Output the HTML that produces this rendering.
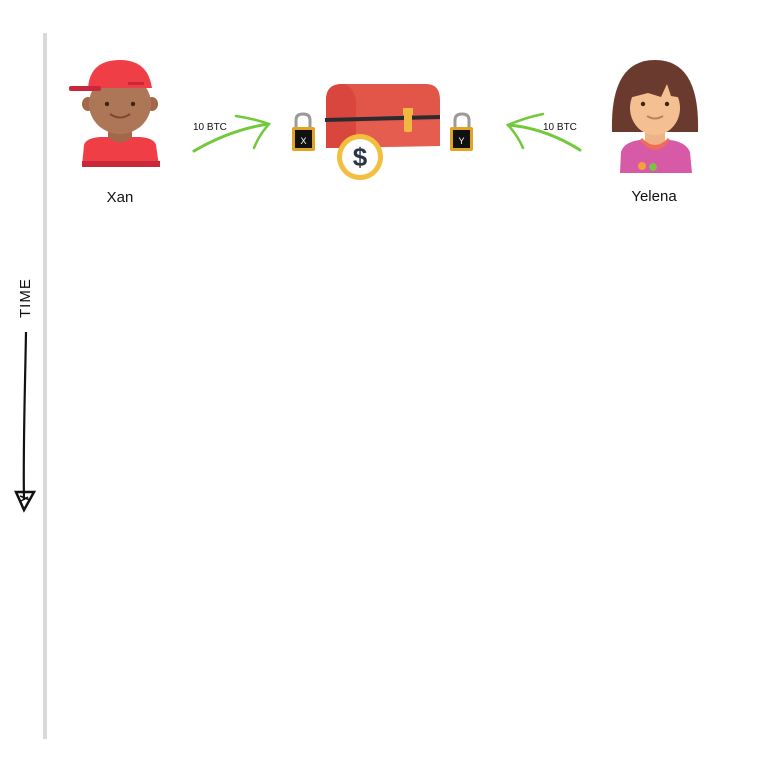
<!DOCTYPE html>
<html><head><meta charset="utf-8"><style>
html,body{margin:0;padding:0;background:#fff;width:768px;height:768px;overflow:hidden}
svg{display:block}
text{font-family:"Liberation Sans",sans-serif}
</style></head><body>
<svg width="768" height="768" viewBox="0 0 768 768">
<rect x="43" y="33" width="4" height="706" fill="#d9d9d9"/>
<text x="0" y="0" transform="translate(30,318) rotate(-90)" font-size="15" fill="#111" letter-spacing="1">TIME</text>
<path d="M26 332 C25 390 23 450 24 500" stroke="#111" stroke-width="2.2" fill="none"/>
<path d="M16 492 L34 492 L24 510 Z" stroke="#111" stroke-width="2.5" fill="none"/>
<path d="M20 496 L30 500 M21 501 L28 497" stroke="#111" stroke-width="1.5"/>

<!-- Xan -->
<g>
<rect x="108" y="125" width="24" height="20" fill="#a1694a"/>
<ellipse cx="88" cy="104" rx="6" ry="7" fill="#a1694a"/>
<ellipse cx="152" cy="104" rx="6" ry="7" fill="#a1694a"/>
<ellipse cx="120" cy="104" rx="31" ry="30" fill="#ad7656"/>
<path d="M88 88 Q90 60 120 60 Q148 60 152 88 Z" fill="#ef3e45"/>
<rect x="69" y="86" width="32" height="5" rx="2" fill="#c8283a"/>
<rect x="128" y="82" width="16" height="3" fill="#c8283a"/>
<circle cx="107" cy="104" r="2.2" fill="#3b2317"/>
<circle cx="133" cy="104" r="2.2" fill="#3b2317"/>
<path d="M110 114 Q120 121 130 114" stroke="#7a4a30" stroke-width="2" fill="none"/>
<path d="M82 166 L84 145 Q86 138 100 137 L108 137 Q120 148 132 137 L140 137 Q154 138 156 145 L159 166 Z" fill="#ef3e45"/>
<rect x="82" y="161" width="78" height="6" fill="#c8283a"/>
</g>
<text x="120" y="202" font-size="15" fill="#111" text-anchor="middle">Xan</text>

<!-- left arrow -->
<path d="M194 151 Q230 130 268 124" stroke="#72c93a" stroke-width="3" fill="none" stroke-linecap="round"/>
<path d="M236 116 Q255 119 269 124 Q259 135 254 148" stroke="#72c93a" stroke-width="2.5" fill="none" stroke-linecap="round"/>
<text x="193" y="130" font-size="10" fill="#111">10 BTC</text>

<!-- locks -->
<g>
<path d="M296 128 V120 Q296 114 303 114 Q310 114 310 120 V128" stroke="#9a9a9a" stroke-width="3" fill="none"/>
<rect x="292" y="127" width="23" height="24" rx="2" fill="#e2a224"/>
<rect x="295" y="130" width="17" height="18" fill="#111"/>
<text x="303.5" y="144" font-size="9" fill="#fff" text-anchor="middle">X</text>
</g>
<g>
<path d="M455 128 V120 Q455 114 462 114 Q469 114 469 120 V128" stroke="#9a9a9a" stroke-width="3" fill="none"/>
<rect x="450" y="127" width="23" height="24" rx="2" fill="#e2a224"/>
<rect x="453" y="130" width="17" height="18" fill="#111"/>
<text x="461.5" y="144" font-size="9" fill="#fff" text-anchor="middle">Y</text>
</g>

<!-- chest -->
<path d="M326 148 V100 Q326 84 342 84 L426 84 Q440 84 440 100 V146 Z" fill="#e2564a"/>
<path d="M326 148 V100 Q326 84 342 84 Q352 84 356 100 V148 Z" fill="#d9463d"/>
<path d="M356 148 L440 146 V120 L356 122 Z" fill="#e96a55" opacity="0.4"/>
<path d="M325 120 L440 117" stroke="#2c2c30" stroke-width="4"/>
<rect x="403" y="108" width="10" height="7" fill="#f0b840"/>
<rect x="404" y="114" width="8" height="18" rx="2" fill="#f0b840"/>
<circle cx="360" cy="157" r="23" fill="#f3bf3f"/>
<circle cx="360" cy="157" r="18" fill="#fff"/>
<text x="360" y="166" font-size="26" font-weight="bold" fill="#2b3447" text-anchor="middle">$</text>

<!-- right arrow -->
<path d="M580 150 Q545 128 508 125" stroke="#72c93a" stroke-width="3" fill="none" stroke-linecap="round"/>
<path d="M543 114 Q524 118 508 125 Q518 136 523 148" stroke="#72c93a" stroke-width="2.5" fill="none" stroke-linecap="round"/>
<text x="543" y="130" font-size="10" fill="#111">10 BTC</text>

<!-- Yelena -->
<g>
<path d="M612 132 Q610 60 655 60 Q700 60 698 132 Z" fill="#6b3a2e"/>
<rect x="645" y="125" width="20" height="20" fill="#eeb387"/>
<ellipse cx="655" cy="108" rx="25" ry="27" fill="#f4c092"/>
<path d="M629 98 Q630 68 656 68 Q683 68 683 98 L671 96 L667 84 L661 97 L648 93 Z" fill="#6b3a2e"/>
<circle cx="643" cy="104" r="2.2" fill="#3b2317"/>
<circle cx="667" cy="104" r="2.2" fill="#3b2317"/>
<path d="M647 116 Q655 121 663 116" stroke="#b7845e" stroke-width="2" fill="none"/>
<path d="M620 173 L621 152 Q624 142 640 140 Q655 155 670 140 Q686 142 690 152 L692 173 Z" fill="#d65aa6"/>
<path d="M640 140 Q655 160 670 140 L668 138 Q655 152 642 138 Z" fill="#f06b5a"/>
<circle cx="642" cy="166" r="4" fill="#f2a23a"/>
<circle cx="653" cy="167" r="4" fill="#7cc047"/>
</g>
<text x="654" y="201" font-size="15" fill="#111" text-anchor="middle">Yelena</text>
</svg>
</body></html>
